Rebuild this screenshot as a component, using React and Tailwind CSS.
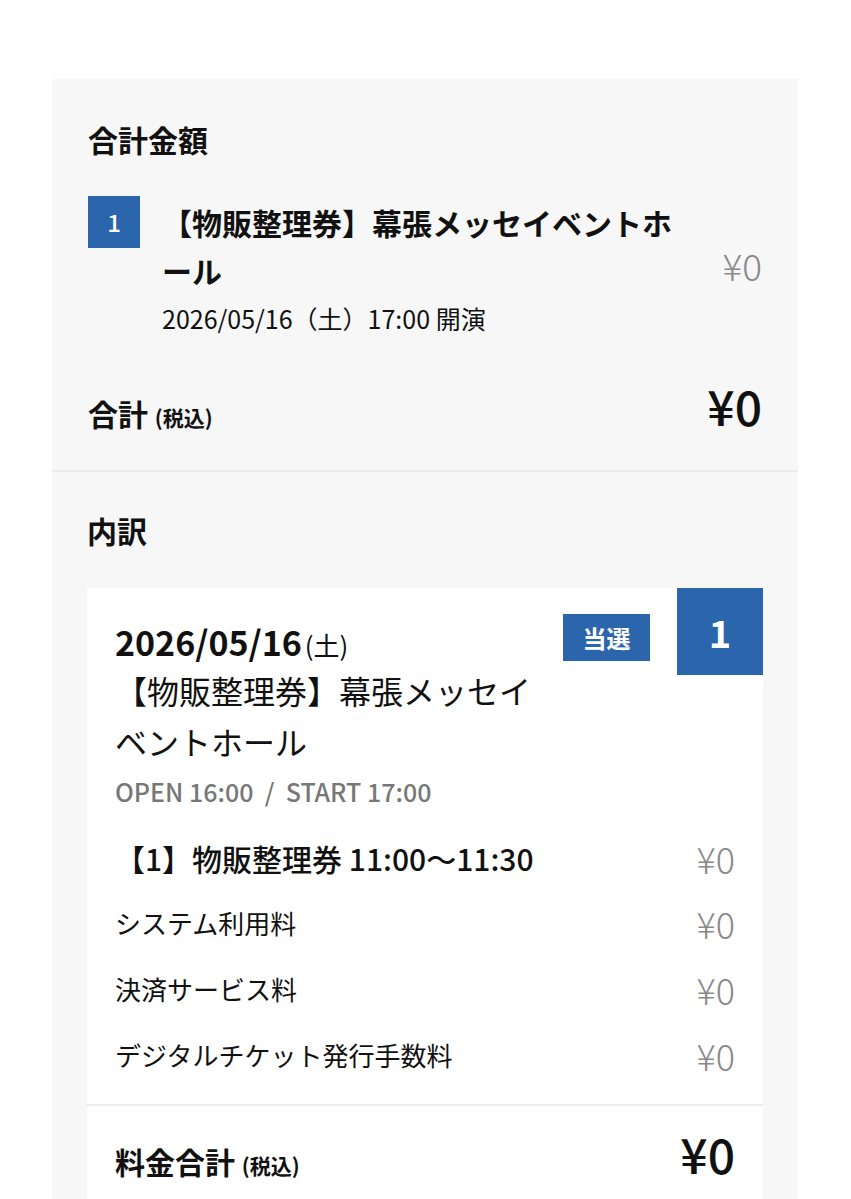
const font = { fontFamily: '"Noto Sans CJK JP", "Noto Sans", sans-serif' };

const fees = [
  { label: "システム利用料", price: "¥0" },
  { label: "決済サービス料", price: "¥0" },
  { label: "デジタルチケット発行手数料", price: "¥0" },
];

export default function App() {
  return (
    <div className="min-h-screen bg-white pt-[79px]" style={font}>
      <div className="mx-[52px] w-[746px] bg-[#f7f7f7] text-[#111]">
        {/* 合計金額 */}
        <div className="px-[36px] pt-[41px] pb-[34px]">
          <h2 className="text-[30px] leading-[38px] font-bold">合計金額</h2>

          <div className="mt-[38px] flex items-center">
            <div className="flex flex-1 items-start">
              <div className="flex h-[52px] w-[52px] shrink-0 items-center justify-center bg-[#2b66ad] text-[24px] font-medium text-white">
                1
              </div>
              <div className="ml-[22px] mt-[2px]">
                <p className="w-[530px] text-[30px] leading-[48px] font-bold">
                  【物販整理券】幕張メッセイベントホール
                </p>
                <p className="mt-[8px] text-[25px] leading-[32px]">
                  2026/05/16（土）17:00 開演
                </p>
              </div>
            </div>
            <span className="text-[37px] leading-[40px] font-light text-[#8a8a8a]">¥0</span>
          </div>

          <div className="mt-[43px] flex items-baseline justify-between">
            <p className="text-[30px] leading-[38px] font-bold">
              合計 <span className="text-[21px] font-bold">(税込)</span>
            </p>
            <span className="text-[48px] leading-[56px] font-medium">¥0</span>
          </div>
        </div>

        <div className="h-[2px] bg-[#ececec]" />

        {/* 内訳 */}
        <div className="px-[35px] pt-[39px]">
          <h2 className="text-[30px] leading-[38px] font-bold">内訳</h2>

          <div className="relative mt-[39px] bg-white">
            <div className="absolute right-0 top-0 flex h-[87px] w-[86px] items-center justify-center bg-[#2b66ad] text-[38px] font-bold text-white">
              1
            </div>
            <div className="absolute right-[113px] top-[26px] flex h-[47px] w-[87px] items-center justify-center bg-[#2b66ad] text-[24px] font-bold text-white">
              当選
            </div>

            <div className="px-[28px] pt-[36px] pb-[29px]">
              <p className="leading-[36px]">
                <span className="text-[34px] font-bold">2026/05/16</span>
                <span className="ml-[3px] text-[26px]">(土)</span>
              </p>
              <p className="mt-[-2px] w-[440px] text-[32px] leading-[51px]">
                【物販整理券】幕張メッセイベントホール
              </p>
              <p className="mt-[8px] text-[25px] leading-[32px] font-medium text-[#777]">
                OPEN 16:00 &nbsp;/&nbsp; START 17:00
              </p>

              <div className="mt-[31px] flex items-center justify-between">
                <span className="text-[30px] leading-[40px] font-medium">【1】物販整理券 11:00〜11:30</span>
                <span className="text-[36px] leading-[40px] font-light text-[#8a8a8a]">¥0</span>
              </div>

              <div className="mt-[25px] flex flex-col gap-[26px]">
                {fees.map((f) => (
                  <div key={f.label} className="flex items-center justify-between">
                    <span className="text-[26px] leading-[40px]">{f.label}</span>
                    <span className="text-[36px] leading-[40px] font-light text-[#8a8a8a]">{f.price}</span>
                  </div>
                ))}
              </div>
            </div>

            <div className="h-[2px] bg-[#ececec]" />

            <div className="flex items-baseline justify-between px-[28px] pt-[19px] pb-[40px]">
              <p className="text-[30px] leading-[38px] font-bold">
                料金合計 <span className="text-[21px] font-bold">(税込)</span>
              </p>
              <span className="text-[48px] leading-[56px] font-medium">¥0</span>
            </div>
          </div>
        </div>
      </div>
    </div>
  );
}
